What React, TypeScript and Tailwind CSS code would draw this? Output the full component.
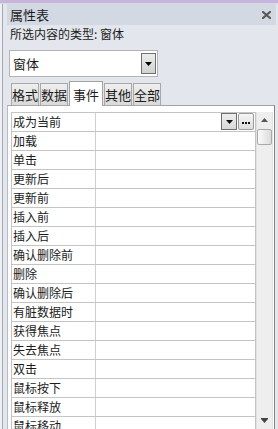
import { useState } from "react";

const EVENTS = [
  "成为当前",
  "加载",
  "单击",
  "更新后",
  "更新前",
  "插入前",
  "插入后",
  "确认删除前",
  "删除",
  "确认删除后",
  "有脏数据时",
  "获得焦点",
  "失去焦点",
  "双击",
  "鼠标按下",
  "鼠标释放",
  "鼠标移动",
];

const TABS = [
  { label: "格式", w: "w-[28px]" },
  { label: "数据", w: "w-[28px]" },
  { label: "事件", w: "w-[34px]" },
  { label: "其他", w: "w-[28px]" },
  { label: "全部", w: "w-[28px]" },
];

function DownArrow({ className }: { className?: string }) {
  return (
    <svg width="7" height="4" viewBox="0 0 7 4" className={className}>
      <path d="M0 0h7L3.5 4z" fill="currentColor" />
    </svg>
  );
}

function PropertyRow({ label, first }: { label: string; first: boolean }) {
  return (
    <div className="flex h-[19px] border-b border-[#c4c4c4]">
      <div className="w-[84px] shrink-0 border-r border-[#cfcfcf] pl-[1px] text-[12px] leading-[18px] whitespace-nowrap">
        {label}
      </div>
      <div className="flex w-[160px] shrink-0 items-start justify-end gap-px border-r border-[#c4c4c4] pr-px">
        {first && (
          <>
            <div className="flex h-[17px] w-[16px] items-center justify-center border border-[#6f6f6f] bg-gradient-to-b from-[#eeeeee] to-[#d9d9d9] text-[#111]">
              <DownArrow />
            </div>
            <div className="flex h-[17px] w-[16px] items-center justify-center gap-px rounded-[2px] border border-[#9c9c9c] bg-gradient-to-b from-[#f4f4f4] to-[#dedede] pt-[3px]">
              <span className="h-[2px] w-[2px] bg-[#111]" />
              <span className="h-[2px] w-[2px] bg-[#111]" />
              <span className="h-[2px] w-[2px] bg-[#111]" />
            </div>
          </>
        )}
      </div>
    </div>
  );
}

function ScrollBar() {
  return (
    <div className="flex h-[317px] w-[17px] shrink-0 flex-col items-center border-x border-[#e2e2e2] bg-[#eeeeee]">
      <div className="mt-[6px] flex h-[4px] items-center text-[#555]">
        <DownArrow className="rotate-180" />
      </div>
      <div className="mt-[7px] h-[16px] w-[15px] rounded-[2px] border border-[#a9a9a9] bg-gradient-to-r from-[#fafafa] to-[#dcdcdc]" />
      <div className="flex-1" />
      <div className="mb-[6px] flex flex-col items-center text-[#444]">
        <div className="h-px w-[7px] bg-[#444]" />
        <DownArrow />
      </div>
    </div>
  );
}

export default function App() {
  const [tab, setTab] = useState("事件");

  return (
    <div className="flex h-[429px] w-[278px] flex-col overflow-hidden bg-[#e9ecf0] font-['Noto_Sans_CJK_SC','Noto_Sans',sans-serif] text-[#1b1b1b]">
      <div className="h-[3px] shrink-0 bg-[#c6b6dc]" />
      <div className="h-px shrink-0 bg-[#dcd5e8]" />

      <div className="flex min-h-0 flex-1">
        <div className="w-[2px] shrink-0 bg-[#eef0f3]" />
        <div className="w-px shrink-0 bg-[#a3a9b1]" />

        <div className="flex min-w-0 flex-1 flex-col bg-[#e3e7ed]">
          {/* title */}
          <div className="ml-[4px] mr-[2px] flex h-[21px] shrink-0 items-center justify-between bg-[#d3d9e2] pl-[3px] pr-[5px]">
            <span className="text-[13px] leading-none">属性表</span>
            <svg width="9" height="8" viewBox="0 0 9 8" className="mt-[1px]">
              <path d="M1 1l7 6M8 1L1 7" stroke="#585858" strokeWidth="2.2" strokeLinecap="square" />
            </svg>
          </div>

          <div className="h-[18px] shrink-0 pl-[7px] text-[12px] leading-[18px] whitespace-nowrap">
            所选内容的类型: 窗体
          </div>

          {/* object combo */}
          <div className="ml-[6px] mt-[7px] flex h-[27px] w-[149px] shrink-0 items-center justify-between border border-[#b3b3b3] bg-white pl-[3px] pr-px">
            <span className="text-[13px] leading-none">窗体</span>
            <div className="flex h-[21px] w-[15px] items-center justify-center border border-[#707070] bg-gradient-to-b from-[#ececec] to-[#d2d2d2] text-black">
              <DownArrow />
            </div>
          </div>

          {/* tabs */}
          <div className="relative z-10 ml-[8px] mt-[4px] -mb-px flex h-[25px] shrink-0 items-end gap-px">
            {TABS.map((t) => {
              const active = t.label === tab;
              return (
                <button
                  key={t.label}
                  onClick={() => setTab(t.label)}
                  className={
                    active
                      ? `${t.w} flex h-[25px] items-center justify-center border border-b-0 border-[#a2a2a2] bg-white text-[13px] leading-none`
                      : `${t.w} flex h-[23px] items-center justify-center border border-[#a8a8a8] bg-gradient-to-b from-[#efefef] to-[#d9d9d9] text-[13px] leading-none`
                  }
                >
                  {t.label}
                </button>
              );
            })}
          </div>

          {/* property sheet */}
          <div className="ml-[4px] flex w-[268px] flex-1 flex-col border-l border-r border-t border-l-[#b7bcc3] border-r-[#848484] border-t-[#a2a2a2] bg-white pl-[3px] pr-px pt-[6px]">
            <div className="flex">
              <div className="flex flex-col border-l border-t border-[#c4c4c4]">
                {EVENTS.map((e, i) => (
                  <PropertyRow key={e} label={e} first={i === 0} />
                ))}
              </div>
              <ScrollBar />
            </div>
          </div>
        </div>
      </div>
    </div>
  );
}
